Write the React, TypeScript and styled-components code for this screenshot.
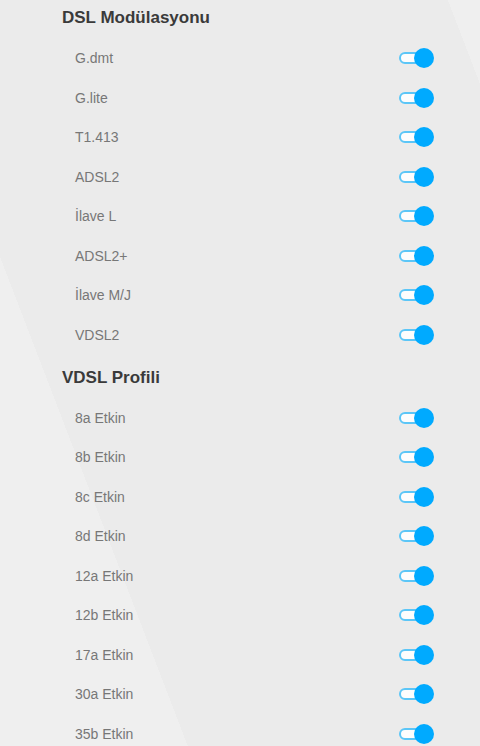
import React from "react";
import styled, { createGlobalStyle } from "styled-components";

const Global = createGlobalStyle`
  html, body { margin: 0; padding: 0; height: 100%; }
  html {
    background:
      linear-gradient(249deg, transparent 75.5%, #efefef 75.5%),
      linear-gradient(69deg, transparent 95.8%, #efefef 95.8%),
      #ebebeb;
  }
  body { overflow: hidden; font-family: "Liberation Sans", Arial, sans-serif; }
`;

const Page = styled.div`
  padding: 6px 46px 0 62px;
  display: flex;
  flex-direction: column;
`;

const Section = styled.section`
  display: flex;
  flex-direction: column;
  & + & { margin-top: 11px; }
`;

const Heading = styled.h2`
  margin: 0 0 8.5px 0;
  height: 24px;
  line-height: 24px;
  font-size: 17px;
  font-weight: bold;
  color: #3a3a3a;
`;

const Row = styled.div`
  height: 39.5px;
  display: flex;
  align-items: center;
  justify-content: space-between;
  padding-left: 13px;
`;

const Label = styled.span`
  font-size: 14px;
  color: #777;
`;

const Toggle = styled.span`
  position: relative;
  width: 35px;
  height: 20px;
  display: block;
`;

const Track = styled.span`
  position: absolute;
  left: 0;
  top: 4px;
  width: 26px;
  height: 8px;
  border: 2px solid #5cc6f7;
  border-radius: 7px;
  background: #fdfdfd;
`;

const Knob = styled.span`
  position: absolute;
  right: 0;
  top: 0;
  width: 20px;
  height: 20px;
  border-radius: 50%;
  background: #00aaff;
`;

const sections = [
  {
    title: "DSL Modülasyonu",
    items: ["G.dmt", "G.lite", "T1.413", "ADSL2", "İlave L", "ADSL2+", "İlave M/J", "VDSL2"],
  },
  {
    title: "VDSL Profili",
    items: ["8a Etkin", "8b Etkin", "8c Etkin", "8d Etkin", "12a Etkin", "12b Etkin", "17a Etkin", "30a Etkin", "35b Etkin"],
  },
];

export default function App() {
  return (
    <>
      <Global />
      <Page>
        {sections.map((s) => (
          <Section key={s.title}>
            <Heading>{s.title}</Heading>
            {s.items.map((it) => (
              <Row key={it}>
                <Label>{it}</Label>
                <Toggle>
                  <Track />
                  <Knob />
                </Toggle>
              </Row>
            ))}
          </Section>
        ))}
      </Page>
    </>
  );
}
